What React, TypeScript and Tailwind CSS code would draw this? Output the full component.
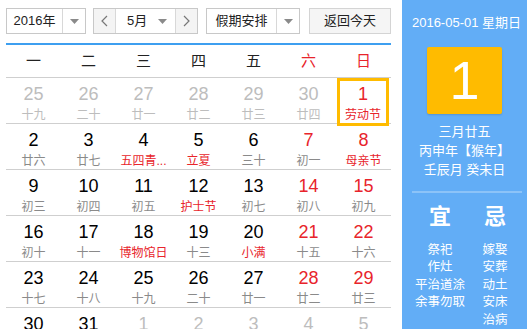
import React from "react"

type Day = { n: number; sub: string; out?: boolean; red?: boolean; fest?: boolean; today?: boolean }

const rows: Day[][] = [
  [
    { n: 25, sub: "十九", out: true },
    { n: 26, sub: "二十", out: true },
    { n: 27, sub: "廿一", out: true },
    { n: 28, sub: "廿二", out: true },
    { n: 29, sub: "廿三", out: true },
    { n: 30, sub: "廿四", out: true },
    { n: 1, sub: "劳动节", red: true, fest: true, today: true },
  ],
  [
    { n: 2, sub: "廿六" },
    { n: 3, sub: "廿七" },
    { n: 4, sub: "五四青...", fest: true },
    { n: 5, sub: "立夏", fest: true },
    { n: 6, sub: "三十" },
    { n: 7, sub: "初一", red: true },
    { n: 8, sub: "母亲节", red: true, fest: true },
  ],
  [
    { n: 9, sub: "初三" },
    { n: 10, sub: "初四" },
    { n: 11, sub: "初五" },
    { n: 12, sub: "护士节", fest: true },
    { n: 13, sub: "初七" },
    { n: 14, sub: "初八", red: true },
    { n: 15, sub: "初九", red: true },
  ],
  [
    { n: 16, sub: "初十" },
    { n: 17, sub: "十一" },
    { n: 18, sub: "博物馆日", fest: true },
    { n: 19, sub: "十三" },
    { n: 20, sub: "小满", fest: true },
    { n: 21, sub: "十五", red: true },
    { n: 22, sub: "十六", red: true },
  ],
  [
    { n: 23, sub: "十七" },
    { n: 24, sub: "十八" },
    { n: 25, sub: "十九" },
    { n: 26, sub: "二十" },
    { n: 27, sub: "廿一" },
    { n: 28, sub: "廿二", red: true },
    { n: 29, sub: "廿三", red: true },
  ],
  [
    { n: 30, sub: "廿四" },
    { n: 31, sub: "廿五" },
    { n: 1, sub: "廿六", out: true },
    { n: 2, sub: "廿七", out: true },
    { n: 3, sub: "廿八", out: true },
    { n: 4, sub: "廿九", out: true },
    { n: 5, sub: "三十", out: true },
  ],
]

const weekdays = ["一", "二", "三", "四", "五", "六", "日"]

const Caret = () => (
  <svg width="9" height="5" viewBox="0 0 9 5">
    <path d="M0 0h9L4.5 5z" fill="#8a8a8a" />
  </svg>
)

const Chevron = ({ dir }: { dir: "l" | "r" }) => (
  <svg width="7" height="12" viewBox="0 0 7 12">
    <path d={dir === "l" ? "M6 1L1 6l5 5" : "M1 1l5 5-5 5"} fill="none" stroke="#777" strokeWidth="1.2" />
  </svg>
)

export default function App() {
  const cjk = { fontFamily: '"Liberation Sans", "Noto Sans CJK SC", sans-serif' }

  return (
    <div className="h-[329px] w-[527px] overflow-hidden flex bg-white" style={cjk}>
      {/* Calendar */}
      <div className="w-[402px] pl-[6px] pr-[11px]">
        {/* Toolbar */}
        <div className="flex items-center pt-[8px] text-[13px] text-[#222]">
          <div className="flex h-[26px] w-[80px] border border-[#c8c8c8] bg-white">
            <div className="flex w-[55px] items-center justify-center">2016年</div>
            <div className="flex flex-1 items-center justify-center border-l border-[#d8d8d8]">
              <Caret />
            </div>
          </div>
          <div className="ml-[7px] flex h-[26px] w-[105px] border border-[#c8c8c8] bg-white">
            <div className="flex w-[22px] items-center justify-center bg-[#f4f4f4] border-r border-[#d8d8d8]">
              <Chevron dir="l" />
            </div>
            <div className="flex flex-1 items-center pl-[11px] pr-[8px]">
              <span className="flex-1">5月</span>
              <Caret />
            </div>
            <div className="flex w-[22px] items-center justify-center bg-[#f4f4f4] border-l border-[#d8d8d8]">
              <Chevron dir="r" />
            </div>
          </div>
          <div className="ml-[8px] flex h-[26px] w-[94px] border border-[#c8c8c8] bg-white">
            <div className="flex w-[69px] items-center justify-center">假期安排</div>
            <div className="flex flex-1 items-center justify-center border-l border-[#d8d8d8]">
              <Caret />
            </div>
          </div>
          <div className="ml-[9px] flex h-[26px] w-[82px] items-center justify-center border border-[#d4d4d4] bg-[#f5f5f5]">
            返回今天
          </div>
        </div>

        {/* Weekdays */}
        <div className="mt-[9px] grid grid-cols-7 h-[35px] border-t-2 border-[#3d9ff0] border-b border-b-[#cfcfcf] text-[15px]">
          {weekdays.map((w, i) => (
            <div key={w} className={`flex items-center justify-center ${i >= 5 ? "text-[#e8242b]" : "text-[#222]"}`}>
              {w}
            </div>
          ))}
        </div>

        {/* Days */}
        {rows.map((row, ri) => (
          <div key={ri} className="grid grid-cols-7 h-[46px] border-b border-[#cfcfcf]">
            {row.map((d, ci) => {
              const numColor = d.out ? "text-[#bdbdbd]" : d.red ? "text-[#e8242b]" : "text-black"
              const subColor = d.out ? "text-[#bdbdbd]" : d.fest ? "text-[#e8242b]" : "text-[#8a8a8a]"
              return (
                <div key={ci} className="flex">
                  <div
                    className={`flex flex-1 flex-col items-center ${
                      d.today ? "mx-[1px] mr-[2px] border-[3px] border-[#ffbb00] pt-[4px]" : "pt-[7px]"
                    }`}
                  >
                    <div className={`text-[18px] leading-[18px] ${numColor}`}>{d.n}</div>
                    <div className={`mt-[4px] whitespace-nowrap text-[12px] leading-[16px] ${subColor}`}>{d.sub}</div>
                  </div>
                </div>
              )
            })}
          </div>
        ))}
      </div>

      {/* Side panel */}
      <div className="flex-1 bg-[#62adf6] text-white flex flex-col items-center">
        <div className="mt-[15px] ml-[4px] text-[13px] leading-[16px] whitespace-nowrap">2016-05-01 星期日</div>
        <div className="mt-[16px] flex h-[74px] w-[75px] items-center justify-center rounded-[2px] bg-[#ffbb00] text-[54px] leading-none shadow-[0_1px_2px_rgba(0,0,0,0.15)]">
          1
        </div>
        <div className="mt-[8px] flex flex-col items-center text-[13px] leading-[19px]">
          <div>三月廿五</div>
          <div>丙申年【猴年】</div>
          <div>壬辰月 癸未日</div>
        </div>
        <div className="mt-[12px] ml-[4px] h-[2px] w-[110px] bg-[#8cc3f8]" />
        <div className="mt-[11px] ml-[6px] grid grid-cols-2 w-[110px]">
          <div className="flex flex-col items-center">
            <div className="text-[22px] font-bold leading-[26px]">宜</div>
            <div className="mt-[12px] flex flex-col items-center text-[12.5px] leading-[17.5px] whitespace-nowrap">
              <div>祭祀</div>
              <div>作灶</div>
              <div>平治道涂</div>
              <div>余事勿取</div>
            </div>
          </div>
          <div className="flex flex-col items-center">
            <div className="text-[22px] font-bold leading-[26px]">忌</div>
            <div className="mt-[12px] flex flex-col items-center text-[12.5px] leading-[17.5px] whitespace-nowrap">
              <div>嫁娶</div>
              <div>安葬</div>
              <div>动土</div>
              <div>安床</div>
              <div>治病</div>
            </div>
          </div>
        </div>
      </div>
    </div>
  )
}
